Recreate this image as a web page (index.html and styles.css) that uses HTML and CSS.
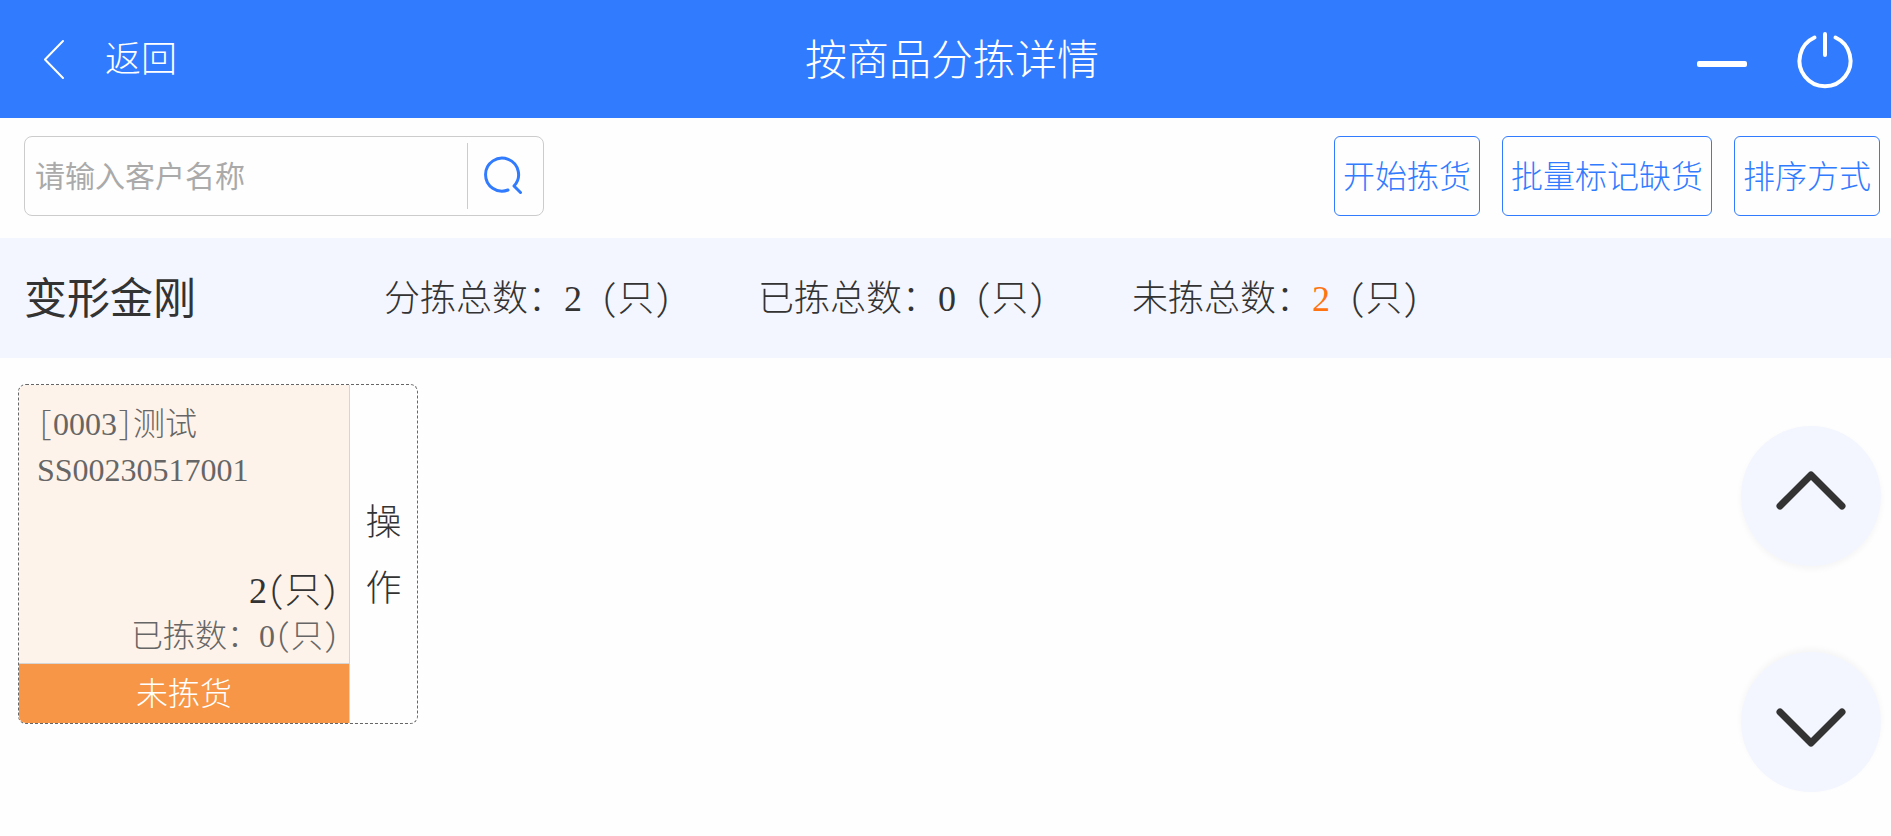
FILE: index.html
```
<!DOCTYPE html>
<html lang="zh-CN">
<head>
<meta charset="UTF-8">
<meta name="viewport" content="width=device-width, initial-scale=1.0">
<title>按商品分拣详情</title>
<link rel="stylesheet" href="styles.css">
</head>
<body>

<header class="header">
    <button type="button" class="back-btn">
        <svg width="22" height="42" viewBox="0 0 22 42"><path d="M20 3L2 21.500l18 18.500"/></svg>
        <span>返回</span>
    </button>
    <h1 class="title">按商品分拣详情</h1>
    <div class="window-btns">
        <button type="button" aria-label="最小化">
            <svg width="50" height="58" viewBox="0 0 50 58"><rect x="0" y="31" width="50" height="6" rx="2"/></svg>
        </button>
        <button type="button" aria-label="退出">
            <svg class="power" width="56" height="60" viewBox="0 0 56 60"><path d="M17.500 8.500A25.500 25.500 0 1 0 38.500 8.500M28 5v21"/></svg>
        </button>
    </div>
</header>

<div class="toolbar">
    <form class="search">
        <input type="text" name="customer" placeholder="请输入客户名称" aria-label="客户名称">
        <button type="submit" aria-label="搜索">
            <svg width="40" height="42" viewBox="0 0 40 42"><path d="M22 35A16.500 16.500 0 1 1 28 31L34.500 37.500"/></svg>
        </button>
    </form>
    <div class="actions">
        <button type="button">开始拣货</button>
        <button type="button">批量标记缺货</button>
        <button type="button">排序方式</button>
    </div>
</div>

<section class="summary">
    <h2 class="goods-name">变形金刚</h2>
    <p>分拣总数：<span class="num">2</span> (只)</p>
    <p>已拣总数：<span class="num">0</span> (只)</p>
    <p>未拣总数：<span class="num orange">2</span> (只)</p>
</section>

<main class="content">
    <div class="card-list">
        <article class="card">
            <div class="card-main">
                <div class="card-info">
                    <p>[<span class="num">0003</span>]测试</p>
                    <p class="num">SS00230517001</p>
                    <div class="count">
                        <p class="total"><span class="num">2</span>(只)</p>
                        <p>已拣数：<span class="num">0</span>(只)</p>
                    </div>
                </div>
                <div class="status">未拣货</div>
            </div>
            <button type="button" class="operate"><span>操</span><span>作</span></button>
        </article>
    </div>
    <div class="pager">
        <button type="button" class="up" aria-label="上一页">
            <svg width="140" height="140" viewBox="0 0 140 140"><path d="M39 80l31-31 31 31"/></svg>
        </button>
        <button type="button" class="down" aria-label="下一页">
            <svg width="140" height="140" viewBox="0 0 140 140"><path d="M39 60l31 31 31-31"/></svg>
        </button>
    </div>
</main>

</body>
</html>
```

FILE: styles.css
```
* {
    box-sizing: border-box;
}

body {
    margin: 0;
    background-color: #fefefe;
    color: #333;
    font-family: "Noto Sans CJK SC", sans-serif;
    font-weight: 300;
    font-feature-settings: "hwid";
}

h1, h2, p {
    margin: 0;
    font-weight: 300;
}

button {
    padding: 0;
    border: none;
    background: none;
    color: inherit;
    font: inherit;
    cursor: pointer;
}

svg {
    display: block;
    overflow: visible;
    fill: none;
    stroke-linecap: round;
    stroke-linejoin: round;
}

.num {
    font-family: "Liberation Serif", "Noto Sans CJK SC", serif;
}

.orange {
    color: #ff7411;
}

/* header */
.header {
    display: grid;
    grid-template-columns: 1fr auto 1fr;
    align-items: center;
    column-gap: 8px;
    height: 118px;
    padding: 0 38px 0 43px;
    background-color: #317bff;
    color: #fff;
}

.back-btn {
    display: flex;
    align-items: center;
    justify-self: start;
    gap: 40px;
    font-size: 36px;
}

.back-btn span {
    padding-bottom: 6px;
}

.back-btn svg {
    stroke: #fff;
    stroke-width: 2;
}

.title {
    padding: 0 0 6px 8px;
    font-size: 42px;
}

.window-btns {
    display: flex;
    align-items: center;
    justify-self: end;
    gap: 50px;
}

.window-btns svg {
    fill: #fff;
}

.window-btns .power {
    fill: none;
    stroke: #fff;
    stroke-width: 4;
}

/* search and buttons */
.toolbar {
    display: flex;
    justify-content: space-between;
    align-items: center;
    padding: 18px 11px 22px 24px;
}

.search {
    display: flex;
    align-items: center;
    width: 520px;
    height: 80px;
    border: 1px solid #ccc;
    border-radius: 8px;
}

.search input {
    flex: 1;
    min-width: 0;
    height: 66px;
    padding: 0 10px 4px;
    border: none;
    border-right: 1px solid #ccc;
    outline: none;
    background: none;
    color: #333;
    font: inherit;
    font-size: 30px;
    font-weight: 400;
}

.search input::placeholder {
    color: #aaa;
}

.search button {
    display: flex;
    justify-content: center;
    width: 75px;
}

.search svg {
    stroke: #317bff;
    stroke-width: 3;
}

.actions {
    display: flex;
    gap: 22px;
}

.actions button {
    height: 80px;
    padding: 0 8px 4px;
    border: 1px solid #317bff;
    border-radius: 6px;
    color: #317bff;
    font-size: 32px;
}

/* goods summary */
.summary {
    display: flex;
    align-items: center;
    gap: 86px;
    height: 120px;
    padding: 0 24px 6px;
    background-color: #f3f6fe;
    font-size: 36px;
}

.goods-name {
    width: 274px;
    color: #333;
    font-size: 43px;
    font-weight: 400;
}

/* cards */
.content {
    display: flex;
    justify-content: space-between;
    padding: 26px 10px 44px 18px;
}

.card {
    display: flex;
    width: 400px;
    height: 340px;
    border: 1px dashed #666;
    border-radius: 8px;
    overflow: hidden;
}

.card-main {
    display: flex;
    flex: 1;
    flex-direction: column;
    border-right: 1px solid #d5d5d5;
}

.card-info {
    display: flex;
    flex: 1;
    flex-direction: column;
    padding: 13px 10px 6px 18px;
    background-color: #fef3ea;
    color: #666;
    font-size: 32px;
    line-height: 46px;
}

.count {
    margin-top: auto;
    line-height: 42px;
    text-align: right;
}

.count .total {
    color: #333;
    font-size: 36px;
}

.status {
    padding-bottom: 4px;
    border-top: 1px solid #d5d5d5;
    background-color: #f79646;
    color: #fff;
    font-size: 32px;
    line-height: 55px;
    text-align: center;
}

.operate {
    display: flex;
    flex-direction: column;
    align-items: center;
    justify-content: center;
    width: 67px;
    padding-bottom: 4px;
    font-size: 36px;
    line-height: 66px;
}

/* page up / down */
.pager {
    display: flex;
    flex-direction: column;
    gap: 86px;
    padding-top: 42px;
}

.pager button {
    border-radius: 50%;
    background-color: #f3f6fe;
}

.pager .up {
    box-shadow: 0 3px 6px rgba(0, 0, 0, 0.04);
}

.pager .down {
    box-shadow: 0 -3px 6px rgba(0, 0, 0, 0.04);
}

.pager svg {
    stroke: #333;
    stroke-width: 7;
}
```
